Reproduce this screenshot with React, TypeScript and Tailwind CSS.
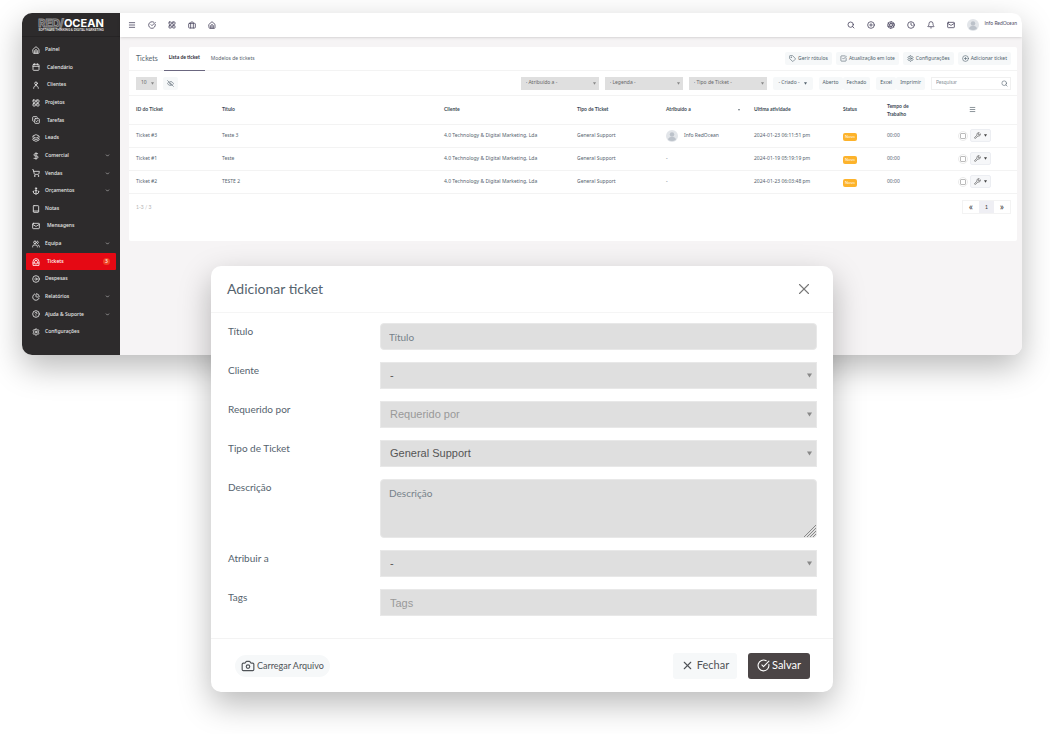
import { useState } from "react";
import type { ComponentType, ReactNode } from "react";
import clsx from "clsx";
import {
  Anchor,
  Aperture,
  Bell,
  Calendar,
  Camera,
  ChartPie,
  ChevronDown,
  CircleArrowRight,
  CircleCheckBig,
  CircleHelp,
  CirclePlus,
  Clock,
  CopyCheck,
  DollarSign,
  EyeOff,
  Layers,
  LayoutGrid,
  Mail,
  Menu,
  Search,
  Settings,
  ShoppingCart,
  SquareCheckBig,
  Tag,
  Users,
  Wrench,
  X,
} from "lucide-react";

type IconType = ComponentType<{ className?: string }>;

const Stroke = ({ className, children }: { className?: string; children: ReactNode }) => (
  <svg
    viewBox="0 0 24 24"
    fill="none"
    stroke="currentColor"
    strokeWidth="2"
    strokeLinecap="round"
    strokeLinejoin="round"
    className={clsx("lucide", className)}
  >
    {children}
  </svg>
);

const HomeIcon: IconType = ({ className }) => (
  <Stroke className={className}>
    <path d="M3 10l9-8 9 8v10a2 2 0 0 1-2 2H5a2 2 0 0 1-2-2z" />
    <path d="M8 21v-6a4 4 0 0 1 8 0v6M12 16v5" />
  </Stroke>
);

const PersonIcon: IconType = ({ className }) => (
  <Stroke className={className}>
    <circle cx="12" cy="7" r="4" />
    <path d="M12 11v3M5 22c0-5 3-8 7-8s7 3 7 8" />
  </Stroke>
);

const NotebookIcon: IconType = ({ className }) => (
  <Stroke className={className}>
    <rect x="4" y="2" width="16" height="20" rx="2" />
    <path d="M4 18h16" />
  </Stroke>
);

const InboxIcon: IconType = ({ className }) => (
  <Stroke className={className}>
    <path d="M3 21V11a9 9 0 0 1 18 0v10z" />
    <path d="M8 14v-3a4 4 0 0 1 8 0v3M3 15h5l2 3h4l2-3h5" />
  </Stroke>
);

const SuitcaseIcon: IconType = ({ className }) => (
  <Stroke className={className}>
    <rect x="2" y="7" width="20" height="14" rx="2" />
    <path d="M8 21V5a2 2 0 0 1 2-2h4a2 2 0 0 1 2 2v16" />
  </Stroke>
);

const Avatar = ({ className }: { className?: string }) => (
  <svg viewBox="0 0 24 24" className={className}>
    <circle cx="12" cy="12" r="12" fill="#e2e5e9" />
    <circle cx="12" cy="9" r="4.5" fill="#bcc2ca" />
    <path d="M4 19c1-4 4-5 8-5s7 1 8 5a12 12 0 0 1-16 0z" fill="#bcc2ca" />
  </svg>
);

const Triangle = ({ className }: { className?: string }) => (
  <svg viewBox="0 0 10 10" fill="currentColor" className={className}>
    <path d="M0 1h10L5 9z" />
  </svg>
);

const navItems: {
  label: string;
  icon: IconType;
  wide?: boolean;
  expandable?: boolean;
  badge?: number;
}[] = [
  { label: "Painel", icon: HomeIcon },
  { label: "Calendário", icon: Calendar, wide: true },
  { label: "Clientes", icon: PersonIcon, wide: true },
  { label: "Projetos", icon: LayoutGrid },
  { label: "Tarefas", icon: CopyCheck, wide: true },
  { label: "Leads", icon: Layers },
  { label: "Comercial", icon: DollarSign, expandable: true },
  { label: "Vendas", icon: ShoppingCart, expandable: true },
  { label: "Orçamentos", icon: Anchor, expandable: true },
  { label: "Notas", icon: NotebookIcon },
  { label: "Mensagens", icon: Mail, wide: true },
  { label: "Equipa", icon: Users, expandable: true },
  { label: "Tickets", icon: InboxIcon, wide: true, badge: 3 },
  { label: "Despesas", icon: CircleArrowRight },
  { label: "Relatórios", icon: ChartPie, expandable: true },
  { label: "Ajuda & Suporte", icon: CircleHelp, expandable: true },
  { label: "Configurações", icon: Settings },
];

const leftShortcuts: { label: string; icon: IconType }[] = [
  { label: "Menu", icon: Menu },
  { label: "Tarefas", icon: CircleCheckBig },
  { label: "Projetos", icon: LayoutGrid },
  { label: "Clientes", icon: SuitcaseIcon },
  { label: "Painel", icon: HomeIcon },
];

const rightShortcuts: { label: string; icon: IconType }[] = [
  { label: "Pesquisar", icon: Search },
  { label: "Adicionar", icon: CirclePlus },
  { label: "Idioma", icon: Aperture },
  { label: "Relógio", icon: Clock },
  { label: "Notificações", icon: Bell },
  { label: "Mensagens", icon: Mail },
];

const tickets = [
  { id: "Ticket #3", title: "Teste 3", assigned: true, date: "2024-01-23 06:11:51 pm" },
  { id: "Ticket #1", title: "Teste", assigned: false, date: "2024-01-19 05:19:19 pm" },
  { id: "Ticket #2", title: "TESTE 2", assigned: false, date: "2024-01-23 06:03:48 pm" },
];

const Sidebar = () => {
  const [active, setActive] = useState("Tickets");

  return (
    <aside className="flex w-[98px] shrink-0 flex-col bg-[#2d2b2c] text-[#e8e8e8] [&_.lucide]:stroke-[2.5]">
      <div className="flex h-6 flex-col items-center justify-center border-b border-[#262425]">
        <div className="text-[11px] leading-[10px] font-bold text-white font-[Inter,sans-serif]">
          <span className="text-[#2d2b2c] [-webkit-text-stroke:1px_#8f8d8e]">RED/</span>
          OCEAN
        </div>
        <div className="text-[3px] leading-[4px] font-bold whitespace-nowrap">
          SOFTWARE THINKING &amp; DIGITAL MARKETING
        </div>
      </div>
      <nav className="flex flex-1 flex-col px-1 pt-1 pb-[14px] font-['Noto_Sans',sans-serif] font-medium">
        {navItems.map(({ label, icon: Icon, wide, expandable, badge }) => (
          <a
            key={label}
            href="#"
            onClick={() => setActive(label)}
            className={clsx(
              "flex min-h-[17px] flex-1 items-center rounded-[1px] px-[6px]",
              active === label && "bg-[#e50914] text-white"
            )}
          >
            <span className={clsx("flex shrink-0", wide ? "w-[15px]" : "w-[13px]")}>
              <Icon className="size-2" />
            </span>
            <span className="flex-1">{label}</span>
            {expandable && <ChevronDown className="size-[5px]" />}
            {badge && (
              <span className="flex size-[7px] items-center justify-center rounded-full bg-[#f04124] text-[5px]">
                {badge}
              </span>
            )}
          </a>
        ))}
      </nav>
    </aside>
  );
};

const TopBar = () => (
  <header className="flex h-6 items-center justify-between bg-white pr-[5px] pl-2 text-[#4e4a63] shadow-sm [&_.lucide]:stroke-[2.5]">
    <div className="flex items-center gap-3">
      {leftShortcuts.map(({ label, icon: Icon }) => (
        <button key={label} aria-label={label}>
          <Icon className="size-2" />
        </button>
      ))}
    </div>
    <div className="flex items-center gap-3">
      {rightShortcuts.map(({ label, icon: Icon }) => (
        <button key={label} aria-label={label}>
          <Icon className="size-2" />
        </button>
      ))}
      <a href="#" className="flex items-center gap-[6px]">
        <Avatar className="size-3" />
        <span className="pb-[2px]">Info RedOcean</span>
      </a>
    </div>
  </header>
);

const ToolButton = ({ icon: Icon, children }: { icon?: IconType; children: ReactNode }) => (
  <button className="flex h-[13px] items-center gap-[2px] rounded-[2px] bg-[#f6f8f9] px-1 font-['Noto_Sans',sans-serif] text-[#4e5e6a]">
    {Icon && <Icon className="size-[7px]" />}
    {children}
  </button>
);

const FilterSelect = ({ label, className }: { label: string; className: string }) => (
  <div className={clsx("relative", className)}>
    <select
      aria-label={label}
      className="h-[13px] w-full appearance-none bg-[#dfdfdf] px-[5px] font-['Noto_Sans',sans-serif] text-[#666]"
    >
      <option>{label}</option>
    </select>
    <Triangle className="pointer-events-none absolute top-[5px] right-[3px] size-[3px] text-[#888]" />
  </div>
);

const TicketTable = () => (
  <table className="w-full table-fixed text-left font-['Noto_Sans',sans-serif]">
    <thead>
      <tr className="h-7 border-b border-[#f3f3f3] text-[#3c4a55] [&>th]:px-[7px] [&>th]:font-[Lato,sans-serif]">
        <th className="w-[86px]">ID do Ticket</th>
        <th>Título</th>
        <th className="w-[133px]">Cliente</th>
        <th className="w-[89px]">Tipo de Ticket</th>
        <th className="w-[88px]">
          <span className="flex items-center justify-between">
            Atribuído a <Triangle className="size-[2px]" />
          </span>
        </th>
        <th className="w-[89px]">Ultima atividade</th>
        <th className="w-[44px]">Status</th>
        <th className="w-[71px] leading-2">
          Tempo de
          <br />
          Trabalho
        </th>
        <th className="w-[66px]">
          <Menu aria-label="Ações" className="ml-[11px] size-[7px]" />
        </th>
      </tr>
    </thead>
    <tbody>
      {tickets.map((ticket) => (
        <tr key={ticket.id} className="h-[23px] border-b border-[#f3f3f3] [&>td]:px-[7px]">
          <td>
            <a href="#">{ticket.id}</a>
          </td>
          <td>
            <a href="#">{ticket.title}</a>
          </td>
          <td className="whitespace-nowrap">4.0 Technology &amp; Digital Marketing, Lda</td>
          <td>General Support</td>
          <td>
            {ticket.assigned ? (
              <a href="#" className="flex items-center gap-[6px]">
                <Avatar className="size-3" />
                Info RedOcean
              </a>
            ) : (
              "-"
            )}
          </td>
          <td className="whitespace-nowrap">{ticket.date}</td>
          <td>
            <span className="mt-[2px] flex h-2 w-[14px] items-center justify-center rounded-[2px] bg-[#fdb32b] text-[4px] text-white">
              Novo
            </span>
          </td>
          <td>00:00</td>
          <td>
            <div className="flex items-center gap-[2px]">
              <span className="flex size-[10px] shrink-0 items-center justify-center rounded-full border border-[#ececec]">
                <input
                  type="checkbox"
                  aria-label={`Selecionar ${ticket.id}`}
                  className="size-[6px] appearance-none rounded-[1px] border border-[#bbb] checked:bg-[#bbb]"
                />
              </span>
              <button
                aria-label="Opções"
                className="flex h-[13px] w-[21px] items-center justify-center gap-[3px] rounded-[2px] border border-[#eceef2] bg-[#f6f7f9] text-[#444]"
              >
                <Wrench className="size-[7px]" />
                <Triangle className="size-[3px]" />
              </button>
            </div>
          </td>
        </tr>
      ))}
    </tbody>
  </table>
);

const TicketsPage = () => (
  <section className="mt-[10px] mr-[5px] ml-[9px] rounded-[2px] bg-white">
    <div className="flex h-6 items-center justify-between border-b border-[#f3f3f3] pr-[6px] pl-[7px]">
      <div className="flex h-6 items-center">
        <h1 className="mr-[6px] text-[7px]">Tickets</h1>
        <a
          href="#"
          className="flex h-6 items-center border-b border-[#6b6780] px-[5px] font-bold text-[#2b2b38]"
        >
          Lista de ticket
        </a>
        <a href="#" className="px-[6px] font-['Noto_Sans',sans-serif]">
          Modelos de tickets
        </a>
      </div>
      <div className="flex gap-1">
        <ToolButton icon={Tag}>Gerir rótulos</ToolButton>
        <ToolButton icon={SquareCheckBig}>Atualização em lote</ToolButton>
        <ToolButton icon={Settings}>Configurações</ToolButton>
        <ToolButton icon={CirclePlus}>Adicionar ticket</ToolButton>
      </div>
    </div>
    <div className="flex h-[25px] items-center justify-between border-b border-[#f3f3f3] pr-[6px] pl-[7px]">
      <div className="flex gap-[6px]">
        <FilterSelect label="10" className="w-[21px]" />
        <button
          aria-label="Ocultar colunas"
          className="flex h-[13px] w-[15px] items-center justify-center rounded-[2px] bg-[#f6f8f9]"
        >
          <EyeOff className="size-[7px]" />
        </button>
      </div>
      <div className="flex gap-[6px]">
        <FilterSelect label="- Atribuído a -" className="w-[78px]" />
        <FilterSelect label="- Legenda -" className="w-[78px]" />
        <FilterSelect label="- Tipo de Ticket -" className="w-[78px]" />
        <button className="flex h-[13px] w-10 items-center justify-center gap-1 rounded-[2px] bg-[#f6f8f9] font-['Noto_Sans',sans-serif]">
          - Criado - <Triangle className="size-[3px]" />
        </button>
        <div className="flex">
          <ToolButton>Aberto</ToolButton>
          <ToolButton>Fechado</ToolButton>
        </div>
        <div className="flex">
          <ToolButton>Excel</ToolButton>
          <ToolButton>Imprimir</ToolButton>
        </div>
        <label className="flex h-[13px] w-20 items-center border border-[#f0f0f0] pr-[2px] pl-1">
          <input
            type="search"
            aria-label="Pesquisar"
            placeholder="Pesquisar"
            className="w-full min-w-0 outline-none placeholder:text-[#8a939b]"
          />
          <Search className="size-[7px] shrink-0" />
        </label>
      </div>
    </div>
    <TicketTable />
    <div className="flex h-[47px] items-start justify-between pt-[6px] pr-[6px] pl-[7px]">
      <span className="leading-[14px] text-[#b5b5b5]">1-3 / 3</span>
      <div className="flex h-[14px] border border-[#f3f3f3] leading-3 text-[#333]">
        <button aria-label="Anterior" className="w-4 pb-px text-[10px] leading-[10px]">
          «
        </button>
        <button className="w-[15px] bg-[#efeff4]">1</button>
        <button aria-label="Seguinte" className="w-4 pb-px text-[10px] leading-[10px]">
          »
        </button>
      </div>
    </div>
  </section>
);

const fieldClass =
  "block w-full border border-[#e8e8e8] bg-[#dfdfdf] outline-none placeholder:text-[#76828a]";

const Field = ({ id, label, children }: { id: string; label: string; children: ReactNode }) => (
  <div className="flex">
    <label htmlFor={id} className="w-[152px] shrink-0 leading-4">
      {label}
    </label>
    <div className="relative flex-1">{children}</div>
  </div>
);

const SelectField = ({
  id,
  label,
  value,
  muted,
}: {
  id: string;
  label: string;
  value: string;
  muted?: boolean;
}) => (
  <Field id={id} label={label}>
    <select
      id={id}
      className={clsx(
        fieldClass,
        "h-[27px] appearance-none px-[9px] font-['Liberation_Sans',sans-serif] text-[11px]",
        muted ? "text-[#999]" : "text-[#555]"
      )}
    >
      <option>{value}</option>
    </select>
    <Triangle className="pointer-events-none absolute top-[11px] right-[5px] size-[5px] text-[#888]" />
  </Field>
);

const TicketModal = () => (
  <div
    role="dialog"
    aria-labelledby="modal-title"
    className="relative mx-auto -mt-[89px] w-full max-w-[622px] rounded-[10px] bg-white text-[11px] shadow-[0_12px_32px_rgba(0,0,0,0.28)]"
  >
    <div className="flex h-[47px] items-center justify-between border-b border-[#f5f5f5] pr-5 pb-px pl-4">
      <h2 id="modal-title" className="text-[14px]">
        Adicionar ticket
      </h2>
      <button aria-label="Fechar janela" className="text-[#777]">
        <X className="size-[18px] stroke-[1.5]" />
      </button>
    </div>
    <form className="flex flex-col gap-3 pt-[10px] pr-4 pb-[22px] pl-[17px] text-[10px]">
      <Field id="titulo" label="Título">
        <input id="titulo" placeholder="Título" className={clsx(fieldClass, "h-[27px] rounded-[4px] px-2")} />
      </Field>
      <SelectField id="cliente" label="Cliente" value="-" />
      <SelectField id="requerido" label="Requerido por" value="Requerido por" muted />
      <SelectField id="tipo" label="Tipo de Ticket" value="General Support" />
      <Field id="descricao" label="Descrição">
        <textarea
          id="descricao"
          placeholder="Descrição"
          className={clsx(fieldClass, "h-[59px] resize-none rounded-[4px] px-2 py-[5px] leading-4")}
        />
        <svg
          viewBox="0 0 12 12"
          stroke="#888"
          className="pointer-events-none absolute right-px bottom-px size-3"
        >
          <path d="M0 12L12 0M3 12l9-9M6 12l6-6M9 12l3-3" />
        </svg>
      </Field>
      <SelectField id="atribuir" label="Atribuir a" value="-" />
      <Field id="tags" label="Tags">
        <input
          id="tags"
          placeholder="Tags"
          className="block h-[27px] w-full border border-[#e8e8e8] bg-[#dfdfdf] px-[9px] font-['Liberation_Sans',sans-serif] text-[11px] outline-none placeholder:text-[#999]"
        />
      </Field>
    </form>
    <div className="flex h-[54px] items-center justify-between border-t border-[#f3f3f3] pr-[23px] pl-6 text-[#4f5357]">
      <button className="flex h-[22px] items-center gap-[2px] rounded-full bg-[#f6f8f9] px-[6px] text-[9px]">
        <Camera className="size-[14px]" />
        Carregar Arquivo
      </button>
      <div className="flex gap-[11px]">
        <button className="flex h-[26px] w-16 items-center justify-center gap-[3px] rounded-[3px] bg-[#f6f8f9]">
          <X className="size-[13px]" />
          Fechar
        </button>
        <button className="flex h-[26px] w-[62px] items-center justify-center gap-[2px] rounded-[3px] bg-[#4b4546] text-white">
          <CircleCheckBig className="size-[13px]" />
          Salvar
        </button>
      </div>
    </div>
  </div>
);

export default function App() {
  return (
    <div className="min-h-screen bg-white pt-[13px] pr-7 pb-[42px] pl-[22px] font-[Lato,sans-serif] text-[5px] text-[#55636e]">
      <div className="flex rounded-[10px] shadow-[0_12px_32px_rgba(0,0,0,0.28)]">
        <div className="flex min-h-[342px] w-full overflow-hidden rounded-[10px]">
          <Sidebar />
          <main className="flex min-w-0 flex-1 flex-col bg-[#f6f4f5]">
            <TopBar />
            <TicketsPage />
          </main>
        </div>
      </div>
      <TicketModal />
    </div>
  );
}
